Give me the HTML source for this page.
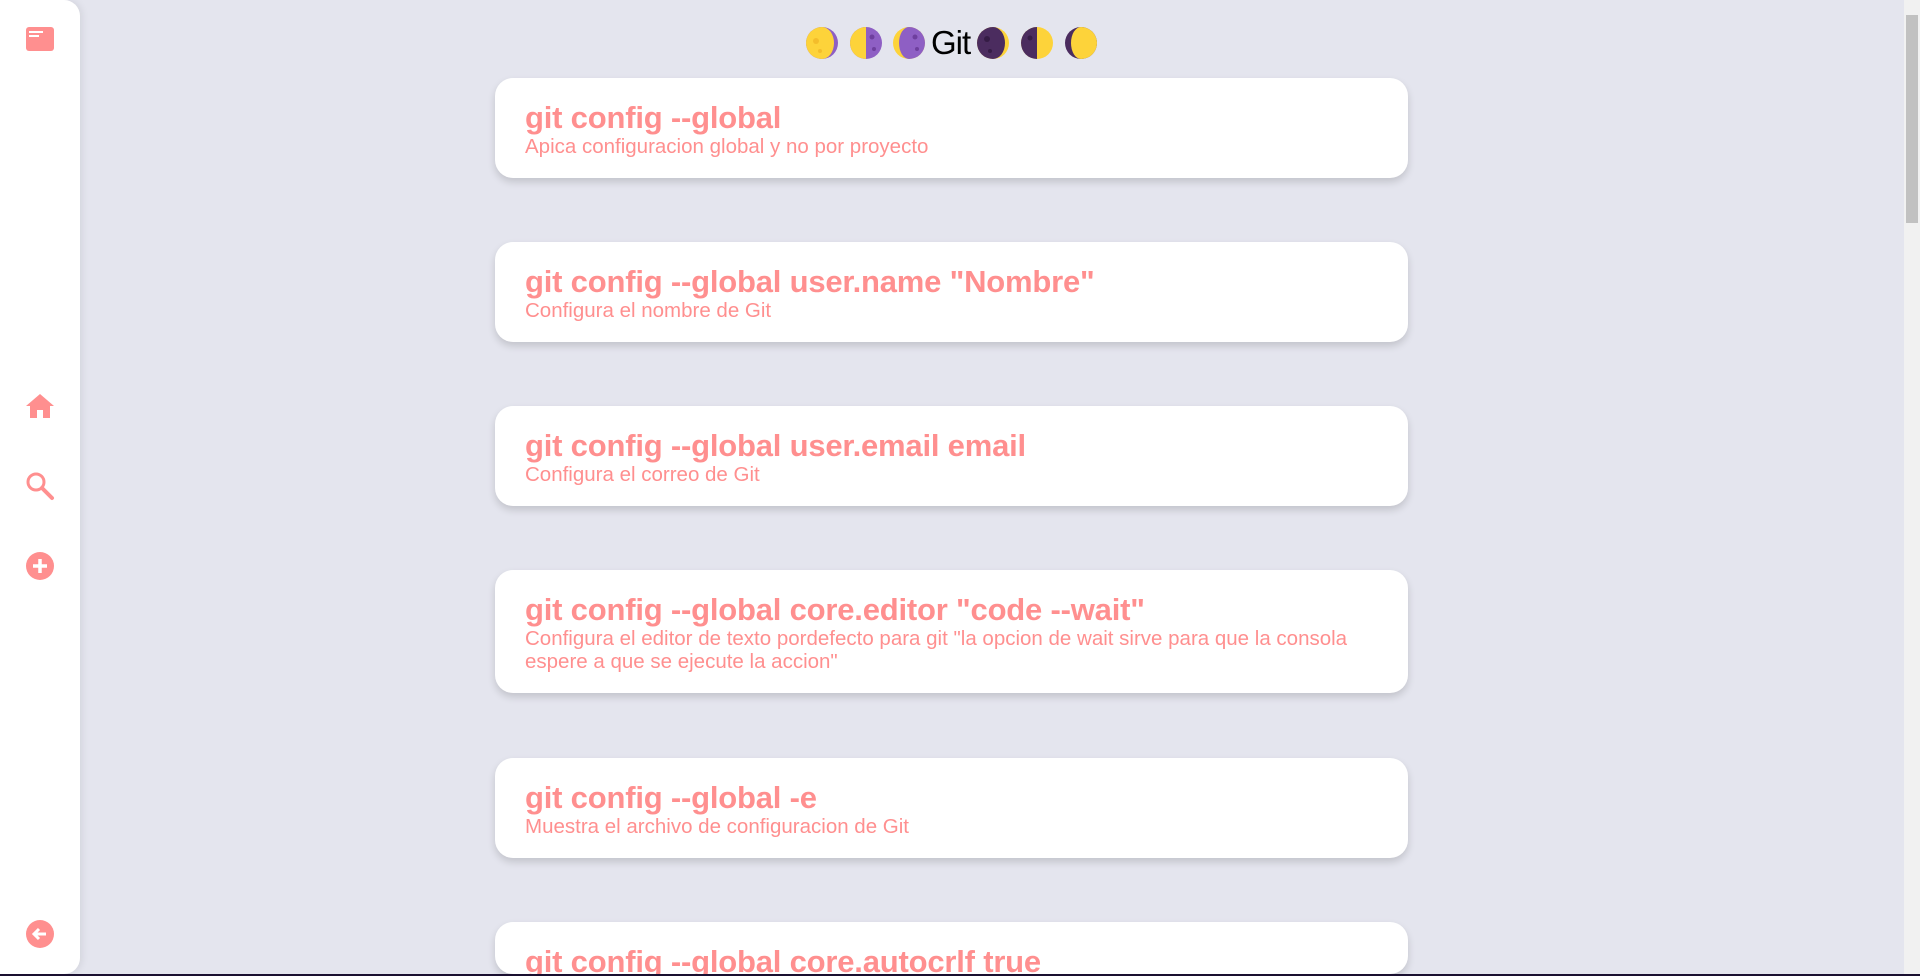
<!DOCTYPE html>
<html><head><meta charset="utf-8"><style>
*{margin:0;padding:0;box-sizing:border-box}
html,body{width:1920px;height:976px;overflow:hidden}
body{background:#e4e5ee;font-family:"Liberation Sans",sans-serif;position:relative}
.side{position:absolute;left:0;top:0;width:80px;height:974px;background:#fff;border-radius:0 16px 16px 0;box-shadow:2px 0 8px rgba(0,0,0,.08)}
.ic{position:absolute;left:25px;width:30px;height:30px}
.card{position:absolute;left:495px;width:913px;background:#fff;border-radius:18px;box-shadow:0 4px 8px rgba(0,0,0,.15);padding:23px 30px 0 30px;color:#ff8f8f}
.card h2{font-size:31px;font-weight:bold;line-height:34px;letter-spacing:-.2px}
.card p{font-size:20.5px;line-height:23px}
.sb{position:absolute;right:0;top:0;width:16px;height:976px;background:#f1f1f1}
.th{position:absolute;right:2px;top:15px;width:12px;height:208px;background:#c1c1c1}
.moon{position:absolute;top:27px}
</style></head><body>
<div class="side">
<svg class="ic" style="top:24px" viewBox="0 0 30 30"><rect x="1" y="3" width="28" height="24" rx="3" fill="#ff8f8f"/><rect x="4" y="7" width="14" height="2" fill="#fff"/><rect x="4" y="11" width="10" height="2" fill="#fff"/></svg>
<svg class="ic" style="top:391px" viewBox="0 0 30 30"><path d="M15 3 L1 15 H5 V27 H12 V19 H18 V27 H25 V15 H29 Z" fill="#ff8f8f"/></svg>
<svg class="ic" style="top:471px" viewBox="0 0 30 30"><circle cx="11" cy="11" r="8" fill="none" stroke="#ff8f8f" stroke-width="3"/><path d="M17 17 L27 27" stroke="#ff8f8f" stroke-width="4" stroke-linecap="round"/></svg>
<svg class="ic" style="top:551px" viewBox="0 0 30 30"><circle cx="15" cy="15" r="14" fill="#ff8f8f"/><path d="M15 8V22M8 15H22" stroke="#fff" stroke-width="3.5"/></svg>
<svg class="ic" style="top:919px" viewBox="0 0 30 30"><circle cx="15" cy="15" r="14" fill="#ff8f8f"/><path d="M21 15H10M14 10L9 15L14 20" stroke="#fff" stroke-width="3" fill="none"/></svg>
</div>
<svg class="moon" style="left:806px" width="32" height="32" viewBox="0 0 32 32"><circle cx="16" cy="16" r="16" fill="#8e5fc4"/><path d="M16 0A16 16 0 0 0 16 32A12 16 0 0 0 16 0Z" fill="#fdd33a"/><circle cx="10" cy="14" r="3" fill="#f4bd2b"/><circle cx="14" cy="24" r="2" fill="#f4bd2b"/></svg>
<svg class="moon" style="left:850px" width="32" height="32" viewBox="0 0 32 32"><circle cx="16" cy="16" r="16" fill="#8e5fc4"/><path d="M16 0A16 16 0 0 0 16 32Z" fill="#fdd33a"/><circle cx="22" cy="10" r="2.5" fill="#6e3f9e"/><circle cx="24" cy="22" r="2" fill="#6e3f9e"/></svg>
<svg class="moon" style="left:893px" width="32" height="32" viewBox="0 0 32 32"><circle cx="16" cy="16" r="16" fill="#fdd33a"/><path d="M16 0A16 16 0 0 1 16 32A10 16 0 0 1 16 0Z" fill="#8e5fc4"/><circle cx="22" cy="10" r="2.5" fill="#6e3f9e"/><circle cx="24" cy="22" r="2" fill="#6e3f9e"/></svg>
<div style="position:absolute;left:931px;top:24px;font-size:33px;color:#000;letter-spacing:-1px">Git</div>
<svg class="moon" style="left:977px" width="32" height="32" viewBox="0 0 32 32"><circle cx="16" cy="16" r="16" fill="#fdd33a"/><path d="M16 0A16 16 0 0 0 16 32A12 16 0 0 0 16 0Z" fill="#4b2c5f"/><circle cx="10" cy="12" r="3" fill="#351c45"/><circle cx="13" cy="24" r="2" fill="#351c45"/></svg>
<svg class="moon" style="left:1021px" width="32" height="32" viewBox="0 0 32 32"><circle cx="16" cy="16" r="16" fill="#fdd33a"/><path d="M16 0A16 16 0 0 0 16 32Z" fill="#4b2c5f"/><circle cx="9" cy="11" r="2.5" fill="#351c45"/></svg>
<svg class="moon" style="left:1065px" width="32" height="32" viewBox="0 0 32 32"><circle cx="16" cy="16" r="16" fill="#4b2c5f"/><path d="M16 0A16 16 0 0 1 16 32A10 16 0 0 1 16 0Z" fill="#fdd33a"/></svg>

<div class="card" style="top:78px;height:100px"><h2>git config --global</h2><p>Apica configuracion global y no por proyecto</p></div>
<div class="card" style="top:242px;height:100px"><h2>git config --global user.name "Nombre"</h2><p>Configura el nombre de Git</p></div>
<div class="card" style="top:406px;height:100px"><h2>git config --global user.email email</h2><p>Configura el correo de Git</p></div>
<div class="card" style="top:570px;height:123px"><h2>git config --global core.editor "code --wait"</h2><p>Configura el editor de texto pordefecto para git "la opcion de wait sirve para que la consola espere a que se ejecute la accion"</p></div>
<div class="card" style="top:758px;height:100px"><h2>git config --global -e</h2><p>Muestra el archivo de configuracion de Git</p></div>
<div class="card" style="top:922px;height:52px;overflow:hidden"><h2>git config --global core.autocrlf true</h2></div>
<div class="sb"><div class="th"></div></div>
<div style="position:absolute;left:0;top:974px;width:1920px;height:2px;background:#1a1030"></div>
</body></html>
